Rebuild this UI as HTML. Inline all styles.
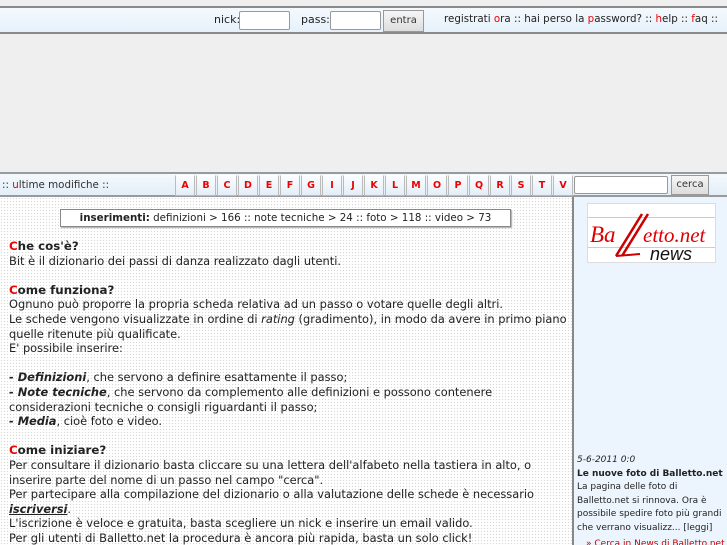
<!DOCTYPE html>
<html><head><meta charset="utf-8"><style>
*{margin:0;padding:0;box-sizing:border-box}
html,body{width:727px;height:545px;overflow:hidden}
body{background:#efefef;font-family:"DejaVu Sans","Liberation Sans",sans-serif;font-size:11px;color:#222;position:relative}
.a{position:absolute}
#top{left:0;top:6px;width:727px;height:28px;background:linear-gradient(#f4f9fd,#e6f1fb);border-top:2px solid #8a8a8a;border-bottom:2px solid #8a8a8a}
.inp{position:absolute;background:#fff;border:1px solid #999;border-radius:2px}
.btn{position:absolute;background:linear-gradient(#f6f6f6,#ddd);border:1px solid #999;font-size:10px;text-align:center;color:#333}
.r{color:#e00}
#bar{left:0;top:172px;width:727px;height:25px;background:linear-gradient(#f4f9fd,#e3eef8);border-top:2px solid #9a9a9a;border-bottom:2px solid #9a9a9a}
.L{position:absolute;top:1px;width:20px;height:21px;border:1px solid #bbb;border-top:1px solid #fff;background:linear-gradient(#fbfdff,#e4eef7);color:#e00;font-weight:bold;font-size:9.5px;text-align:center;line-height:20px}
#main{left:0;top:197px;width:572px;height:348px;background-color:#fff;background-image:radial-gradient(circle,#d8d8d8 0.7px,transparent 0.8px);background-size:3px 3px}
#side{left:572px;top:197px;width:155px;height:348px;background:#ecf5fd;border-left:2px solid #888;overflow:hidden}
#txt{left:9px;top:239px;font-size:11.4px;line-height:14.6px;color:#222;white-space:nowrap}
#txt b.h{font-size:11.8px}
</style></head><body>
<div id="top" class="a">
 <span class="a" style="left:214px;top:5px">nick:</span>
 <div class="inp" style="left:239px;top:3px;width:51px;height:19px"></div>
 <span class="a" style="left:301px;top:5px">pass:</span>
 <div class="inp" style="left:330px;top:3px;width:51px;height:19px"></div>
 <div class="btn" style="left:383px;top:2px;width:41px;height:22px;line-height:20px">entra</div>
 <span class="a" style="left:444px;top:5px;font-size:10.3px;white-space:nowrap">registrati <span class="r">o</span>ra :: hai perso la <span class="r">p</span>assword? :: <span class="r">h</span>elp :: <span class="r">f</span>aq ::</span>
</div>
<div id="bar" class="a">
 <span class="a" style="left:2px;top:5px;font-size:10.3px;color:#333">:: <span class="r">u</span>ltime modifiche ::</span>
 <div class="L" style="left:175px">A</div><div class="L" style="left:196px">B</div><div class="L" style="left:217px">C</div><div class="L" style="left:238px">D</div><div class="L" style="left:259px">E</div><div class="L" style="left:280px">F</div><div class="L" style="left:301px">G</div><div class="L" style="left:322px">I</div><div class="L" style="left:343px">J</div><div class="L" style="left:364px">K</div><div class="L" style="left:385px">L</div><div class="L" style="left:406px">M</div><div class="L" style="left:427px">O</div><div class="L" style="left:448px">P</div><div class="L" style="left:469px">Q</div><div class="L" style="left:490px">R</div><div class="L" style="left:511px">S</div><div class="L" style="left:532px">T</div><div class="L" style="left:553px">V</div>
 <div class="inp" style="left:574px;top:2px;width:94px;height:18px"></div>
 <div class="btn" style="left:671px;top:1px;width:38px;height:20px;line-height:18px">cerca</div>
</div>
<div id="main" class="a"></div>
<div class="a" style="left:60px;top:209px;width:451px;height:18px;background:#fff;border:1px solid #888;box-shadow:1px 1px 1px #aaa;text-align:center;line-height:16px;font-size:10.3px;white-space:nowrap"><b>inserimenti:</b> definizioni &gt; 166 :: note tecniche &gt; 24 :: foto &gt; 118 :: video &gt; 73</div>
<div id="txt" class="a">
<b class="h"><span class="r">C</span>he cos'è?</b><br>
Bit è il dizionario dei passi di danza realizzato dagli utenti.<br><br>
<b class="h"><span class="r">C</span>ome funziona?</b><br>
Ognuno può proporre la propria scheda relativa ad un passo o votare quelle degli altri.<br>
Le schede vengono visualizzate in ordine di <i>rating</i> (gradimento), in modo da avere in primo piano<br>
quelle ritenute più qualificate.<br>
E' possibile inserire:<br><br>
<b><i>- Definizioni</i></b>, che servono a definire esattamente il passo;<br>
<b><i>- Note tecniche</i></b>, che servono da complemento alle definizioni e possono contenere<br>
considerazioni tecniche o consigli riguardanti il passo;<br>
<b><i>- Media</i></b>, cioè foto e video.<br><br>
<b class="h"><span class="r">C</span>ome iniziare?</b><br>
Per consultare il dizionario basta cliccare su una lettera dell'alfabeto nella tastiera in alto, o<br>
inserire parte del nome di un passo nel campo "cerca".<br>
Per partecipare alla compilazione del dizionario o alla valutazione delle schede è necessario<br>
<b><i><u>iscriversi</u></i></b>.<br>
L'iscrizione è veloce e gratuita, basta scegliere un nick e inserire un email valido.<br>
Per gli utenti di Balletto.net la procedura è ancora più rapida, basta un solo click!
</div>
<div id="side" class="a">
 <div class="a" style="left:13px;top:6px;width:129px;height:60px;background:#fff;border:1px solid #ddd">
  <div class="a" style="left:0;top:13px;width:127px;border-top:1px solid #ccc"></div>
  <div class="a" style="left:0;top:43px;width:127px;border-top:1px solid #ccc"></div>
  <svg class="a" style="left:0;top:0" width="127" height="58">
  <path d="M28 52 L54 10 M34 52 L60 10" stroke="#c00" stroke-width="2.5" fill="none"/>
  <path d="M28 52 L52 50" stroke="#c00" stroke-width="2" fill="none"/>
  <text x="2" y="38" font-family="Liberation Serif,serif" font-style="italic" font-size="23" fill="#d00">Ba</text>
  <text x="55" y="38" font-family="Liberation Serif,serif" font-style="italic" font-size="21" fill="#d00">etto.net</text>
  <text x="62" y="56" font-family="Liberation Sans,sans-serif" font-style="italic" font-size="18" fill="#111">news</text></svg>
 </div>
 <div class="a" style="left:3px;top:257px;font-size:9px;line-height:13.5px;color:#222;white-space:nowrap">
  <i>5-6-2011 0:0</i><br><b>Le nuove foto di Balletto.net</b><br>La pagina delle foto di<br>Balletto.net si rinnova. Ora è<br>possibile spedire foto più grandi<br>che verrano visualizz... [leggi]
 </div>
 <div class="a" style="left:12px;top:342px;font-size:9px;color:#c00;white-space:nowrap">» Cerca in News di Balletto.net</div>
</div>
</body></html>
